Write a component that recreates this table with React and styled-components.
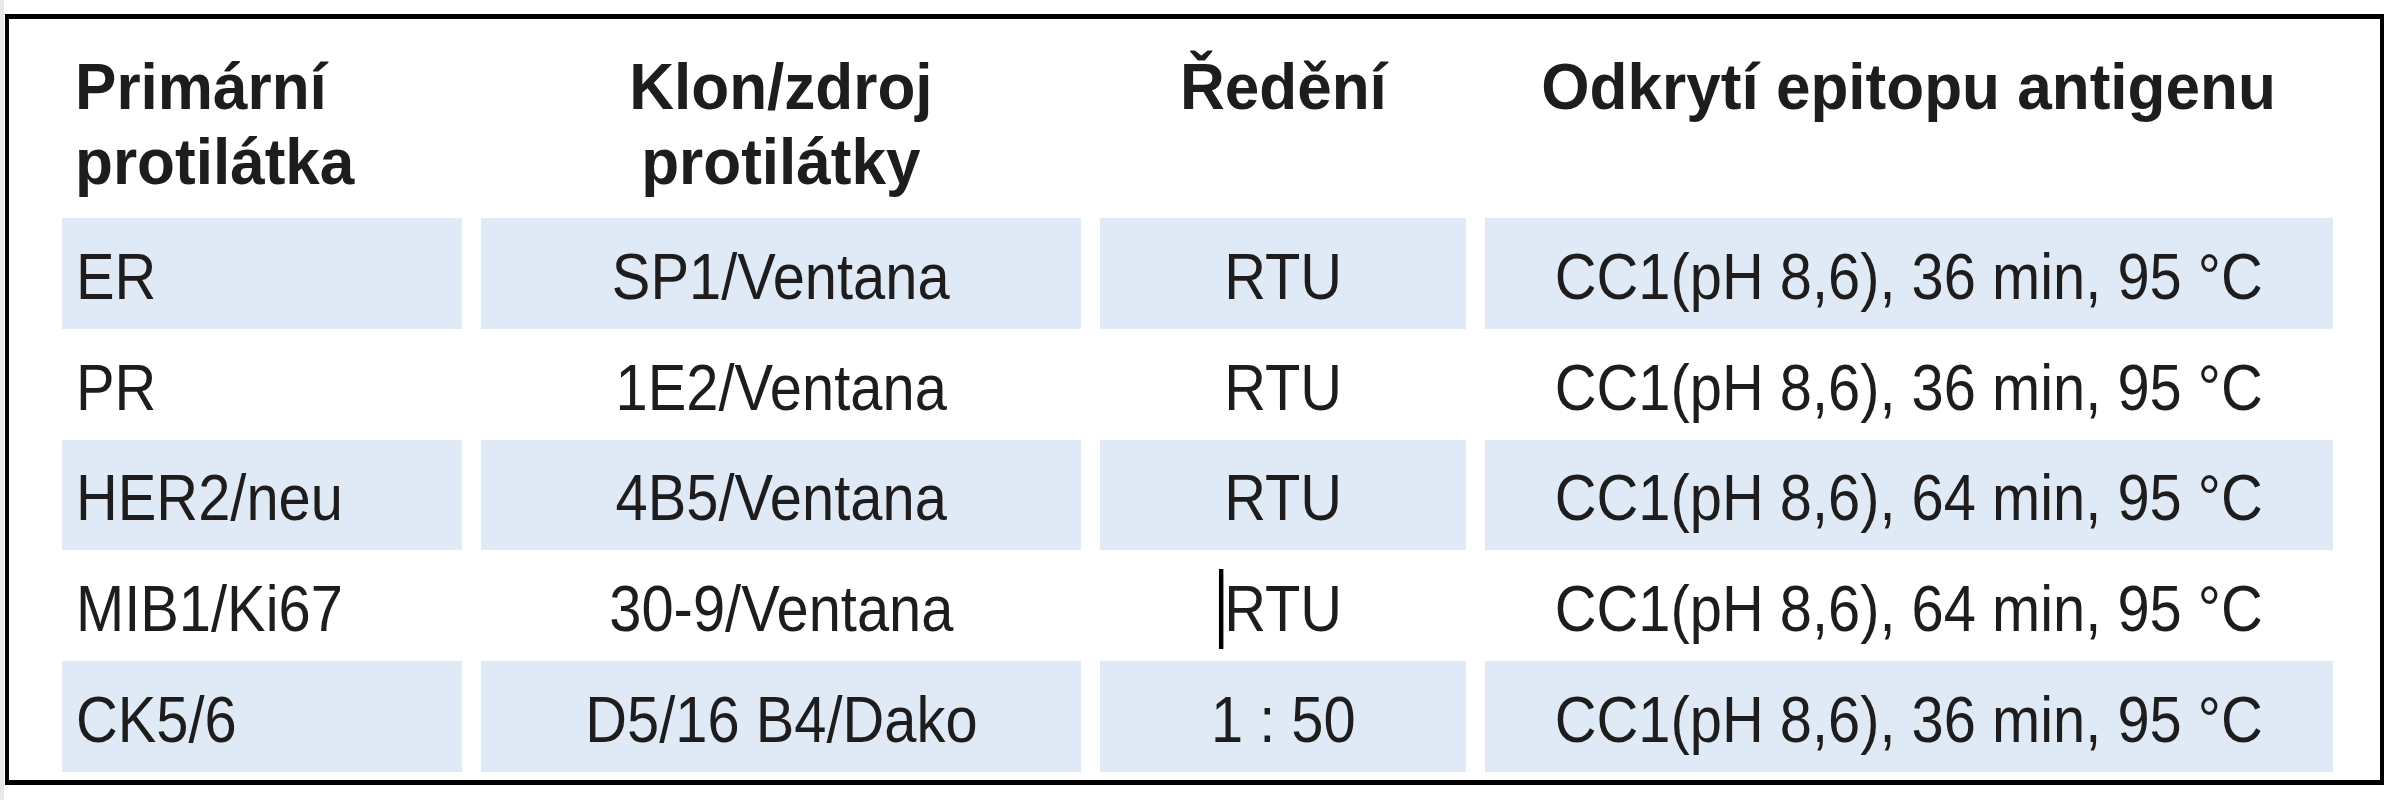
import React from 'react'
import styled, { createGlobalStyle } from 'styled-components'

const GlobalStyle = createGlobalStyle`
  html, body {
    margin: 0;
    padding: 0;
    background: #fff;
  }
`

const Page = styled.div`
  box-sizing: border-box;
  width: 2390px;
  height: 800px;
  background: #fff;
  border-left: 4px solid #e8e8e8;
  padding: 14px 0 0 1px;
`

const Frame = styled.div`
  box-sizing: border-box;
  width: 2379px;
  height: 771px;
  border-style: solid;
  border-color: #000;
  border-width: 5px 4px;
  padding: 0 47px 8px 53px;
  display: grid;
  grid-template-columns: 400px 600px 366px 848px;
  grid-template-rows: 199px repeat(5, 110.8px);
  column-gap: 19px;
  font-family: "Liberation Sans", Arial, sans-serif;
  color: #1e1c1d;
`

const HeadCell = styled.div`
  padding-top: 30px;
  padding-left: ${p => (p.$left ? '13px' : '0')};
  text-align: ${p => (p.$left ? 'left' : 'center')};
  font-size: 65px;
  line-height: 75px;
  font-weight: bold;
  white-space: nowrap;
`

const HeadText = styled.span`
  display: inline-block;
  transform: scaleX(0.955);
  transform-origin: ${p => (p.$left ? 'left center' : 'center')};
`

const Cell = styled.div`
  display: flex;
  align-items: center;
  justify-content: ${p => (p.$left ? 'flex-start' : 'center')};
  padding: 6px 0 0 ${p => (p.$left ? '14px' : '0')};
  background: ${p => (p.$shaded ? '#dfeaf6' : 'transparent')};
  font-size: 65px;
  line-height: 75px;
  white-space: nowrap;
`

// the source face is a condensed sans, so the text is narrowed
const Value = styled.span`
  position: relative;
  display: inline-block;
  transform: scaleX(0.89);
  transform-origin: ${p => (p.$left ? 'left center' : 'center')};
`

const Caret = styled.span`
  position: absolute;
  left: -6px;
  top: -2px;
  width: 5px;
  height: 80px;
  background: #000;
`

const rows = [
  { name: 'ER', clone: 'SP1/Ventana', dilution: 'RTU', retrieval: 'CC1(pH 8,6), 36 min, 95 °C' },
  { name: 'PR', clone: '1E2/Ventana', dilution: 'RTU', retrieval: 'CC1(pH 8,6), 36 min, 95 °C' },
  { name: 'HER2/neu', clone: '4B5/Ventana', dilution: 'RTU', retrieval: 'CC1(pH 8,6), 64 min, 95 °C' },
  { name: 'MIB1/Ki67', clone: '30-9/Ventana', dilution: 'RTU', retrieval: 'CC1(pH 8,6), 64 min, 95 °C', caret: true },
  { name: 'CK5/6', clone: 'D5/16 B4/Dako', dilution: '1 : 50', retrieval: 'CC1(pH 8,6), 36 min, 95 °C' },
]

const App = () => {
  return (
    <>
      <GlobalStyle />
      <Page>
        <Frame>
          <HeadCell $left><HeadText $left>Primární<br />protilátka</HeadText></HeadCell>
          <HeadCell><HeadText>Klon/zdroj<br />protilátky</HeadText></HeadCell>
          <HeadCell><HeadText>Ředění</HeadText></HeadCell>
          <HeadCell><HeadText>Odkrytí epitopu antigenu</HeadText></HeadCell>

          {rows.map((row, key) => {
            const shaded = key % 2 === 0
            return (
              <React.Fragment key={key}>
                <Cell $left $shaded={shaded}><Value $left>{row.name}</Value></Cell>
                <Cell $shaded={shaded}><Value>{row.clone}</Value></Cell>
                <Cell $shaded={shaded}>
                  <Value>
                    {row.caret && <Caret />}
                    {row.dilution}
                  </Value>
                </Cell>
                <Cell $shaded={shaded}><Value>{row.retrieval}</Value></Cell>
              </React.Fragment>
            )
          })}
        </Frame>
      </Page>
    </>
  )
}

export default App
